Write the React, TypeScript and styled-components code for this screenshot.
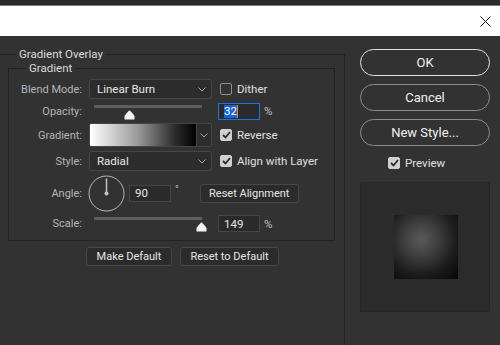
import React from "react";
import styled, { createGlobalStyle } from "styled-components";

const GlobalStyle = createGlobalStyle`
  html, body {
    margin: 0;
    padding: 0;
    background: #323232;
  }
  * {
    box-sizing: border-box;
  }
`;

const Chevron = () => (
  <svg width="8" height="5" viewBox="0 0 8 5">
    <polyline points="0.5,0.5 4,4 7.5,0.5" fill="none" stroke="#a8a8a8" strokeWidth="1" />
  </svg>
);

const Check = () => (
  <svg width="9" height="8" viewBox="0 0 9 8">
    <polyline points="1,4 3.5,6.5 8,1" fill="none" stroke="#2b2b2b" strokeWidth="1.8" />
  </svg>
);

const Thumb = () => (
  <svg width="11" height="10" viewBox="0 0 11 10">
    <path d="M5.5 0.5 Q6.5 0.5 10.5 6 V9.5 H0.5 V6 Q4.5 0.5 5.5 0.5 Z" fill="#f2f2f2" />
  </svg>
);

const Dial = ({ angle }: { angle: number }) => {
  const r = (angle * Math.PI) / 180;
  const x = 18 + Math.cos(r) * 15;
  const y = 18 - Math.sin(r) * 15;
  return (
    <svg width="37" height="37" viewBox="0 0 37 37">
      <circle cx="18.5" cy="18.5" r="17.5" fill="none" stroke="#b8b8b8" strokeWidth="1" />
      <line x1="18.5" y1="18.5" x2={x + 0.5} y2={y + 0.5} stroke="#c4c4c4" strokeWidth="1.5" />
      <circle cx="18.5" cy="18.5" r="2" fill="#c4c4c4" />
    </svg>
  );
};

const CheckBox = ({ checked, label }: { checked?: boolean; label: string }) => (
  <CheckLine>
    <Box $checked={checked}>{checked ? <Check /> : null}</Box>
    <span>{label}</span>
  </CheckLine>
);

const Slider = ({ pct }: { pct: number }) => (
  <SliderWrap>
    <TrackArea>
      <Track />
      <ThumbHold style={{ left: `${pct}%` }}>
        <Thumb />
      </ThumbHold>
    </TrackArea>
  </SliderWrap>
);

const App = () => {
  return (
    <>
      <GlobalStyle />
      <Window>
        <TopStrip />
        <TitleBar>
          <svg width="11" height="11" viewBox="0 0 11 11">
            <line x1="0.5" y1="0.5" x2="10.5" y2="10.5" stroke="#111" strokeWidth="1" />
            <line x1="10.5" y1="0.5" x2="0.5" y2="10.5" stroke="#111" strokeWidth="1" />
          </svg>
        </TitleBar>
        <Body>
          <LeftPane>
            <Outer>
              <Legend>Gradient Overlay</Legend>
              <Inner>
                <Legend $inner>Gradient</Legend>
                <Row $h={20}>
                  <Label>Blend Mode:</Label>
                  <Select>
                    <span>Linear Burn</span>
                    <Chevron />
                  </Select>
                  <Side>
                    <CheckBox label="Dither" />
                  </Side>
                </Row>
                <Row $h={16}>
                  <Label>Opacity:</Label>
                  <Slider pct={32} />
                  <Side $shift={-2}>
                    <Field $active>
                      <Selected>32</Selected>
                      <Caret />
                    </Field>
                    <Unit>%</Unit>
                  </Side>
                </Row>
                <Row $h={24}>
                  <Label>Gradient:</Label>
                  <Swatch>
                    <Ramp />
                    <SwatchDrop>
                      <Chevron />
                    </SwatchDrop>
                  </Swatch>
                  <Side>
                    <CheckBox checked label="Reverse" />
                  </Side>
                </Row>
                <Row $h={20}>
                  <Label>Style:</Label>
                  <Select>
                    <span>Radial</span>
                    <Chevron />
                  </Select>
                  <Side>
                    <CheckBox checked label="Align with Layer" />
                  </Side>
                </Row>
                <Row $h={36}>
                  <Label>Angle:</Label>
                  <AngleGroup>
                    <Dial angle={90} />
                    <Field $w={42}>90</Field>
                    <Degree>°</Degree>
                    <FlatButton $w={99}>Reset Alignment</FlatButton>
                  </AngleGroup>
                </Row>
                <Row $h={17}>
                  <Label>Scale:</Label>
                  <Slider pct={(149 / 150) * 100} />
                  <Side $shift={-2}>
                    <Field>149</Field>
                    <Unit>%</Unit>
                  </Side>
                </Row>
              </Inner>
              <ButtonRow>
                <FlatButton $w={86}>Make Default</FlatButton>
                <FlatButton $w={99}>Reset to Default</FlatButton>
              </ButtonRow>
            </Outer>
          </LeftPane>
          <RightPane>
            <Pill $primary>OK</Pill>
            <Pill>Cancel</Pill>
            <Pill>New Style...</Pill>
            <PreviewLine>
              <CheckBox checked label="Preview" />
            </PreviewLine>
            <PreviewBox>
              <PreviewSquare />
            </PreviewBox>
          </RightPane>
        </Body>
      </Window>
    </>
  );
};

export default App;

const Window = styled.div`
  width: 500px;
  height: 345px;
  overflow: hidden;
  background: #323232;
  display: flex;
  flex-direction: column;
  font-family: Roboto, "Liberation Sans", sans-serif;
  font-size: 11px;
  color: #b6b6b6;
`;

const TopStrip = styled.div`
  height: 6px;
  flex-shrink: 0;
  background: #2b2b2b;
  border-bottom: 1px solid #7a7a7a;
`;

const TitleBar = styled.div`
  height: 30px;
  flex-shrink: 0;
  background: #ffffff;
  display: flex;
  align-items: center;
  justify-content: flex-end;
  padding-right: 9px;
`;

const Body = styled.div`
  flex: 1;
  display: flex;
  min-height: 0;
  overflow: hidden;
`;

const LeftPane = styled.div`
  width: 345px;
  flex-shrink: 0;
`;

const Outer = styled.fieldset`
  width: 346px;
  height: 340px;
  margin: 11px 0 0 -1px;
  padding: 0;
  border: 1px solid #222222;
  min-width: 0;
`;

const Legend = styled.legend<{ $inner?: boolean }>`
  margin-left: ${({ $inner }) => ($inner ? "17px" : "16px")};
  padding: 0 3px;
  line-height: 14px;
  font-size: 11.5px;
  color: #dcdcdc;
`;

const Inner = styled.fieldset`
  margin: 0 9px 0 8px;
  padding: 4px 0 8px 0;
  border: 1px solid #222222;
  display: flex;
  flex-direction: column;
  gap: 4px;
  min-width: 0;
`;

const Row = styled.div<{ $h: number }>`
  height: ${({ $h }) => $h}px;
  display: flex;
  align-items: center;
`;

const Label = styled.div`
  width: 80px;
  padding-right: 7px;
  text-align: right;
  color: #b0b6bd;
  flex-shrink: 0;
`;

const Select = styled.div`
  width: 123px;
  height: 100%;
  background: #2c2c2c;
  border: 1px solid #464646;
  border-radius: 3px;
  display: flex;
  align-items: center;
  justify-content: space-between;
  padding: 0 5px 0 7px;
  color: #e8e8e8;
  font-size: 11.5px;
`;

const Side = styled.div<{ $shift?: number }>`
  margin-left: ${({ $shift }) => 8 + ($shift || 0)}px;
  display: flex;
  align-items: center;
  gap: 4px;
`;

const CheckLine = styled.div`
  display: flex;
  align-items: center;
  gap: 5px;
  color: #e0e0e0;
  font-size: 11.5px;
`;

const Box = styled.div<{ $checked?: boolean }>`
  width: 12px;
  height: 12px;
  border-radius: 2px;
  display: flex;
  align-items: center;
  justify-content: center;
  background: ${({ $checked }) => ($checked ? "#d0d0d0" : "transparent")};
  border: 1px solid ${({ $checked }) => ($checked ? "#d0d0d0" : "#8e8e8e")};
`;

const SliderWrap = styled.div`
  width: 123px;
  height: 100%;
  padding-left: 5px;
  align-self: stretch;
`;

const TrackArea = styled.div`
  position: relative;
  width: 108px;
  height: 100%;
`;

const Track = styled.div`
  margin-top: 2px;
  height: 3px;
  width: 100%;
  background: #5e5e5e;
`;

const ThumbHold = styled.div`
  position: absolute;
  top: 5px;
  margin-left: -5px;
  display: flex;
  line-height: 0;
`;

const Field = styled.div<{ $w?: number; $active?: boolean }>`
  width: ${({ $w }) => $w || 42}px;
  height: 17px;
  background: #2a2a2a;
  border: 1px solid ${({ $active }) => ($active ? "#1a73e8" : "#464646")};
  display: flex;
  align-items: center;
  padding-left: 5px;
  color: #e8e8e8;
  font-size: 11.5px;
`;

const Selected = styled.span`
  background: #1c64d4;
  color: #ffffff;
  line-height: 13px;
`;

const Caret = styled.span`
  width: 1px;
  height: 13px;
  background: #f08a24;
`;

const Unit = styled.span`
  color: #c0c0c0;
  font-size: 11.5px;
`;

const Swatch = styled.div`
  width: 123px;
  height: 100%;
  display: flex;
  border: 1px solid #464646;
  border-radius: 2px;
  overflow: hidden;
`;

const Ramp = styled.div`
  flex: 1;
  background: linear-gradient(to right, #ffffff 0%, #9a9a9a 45%, #2c2c2c 80%, #000000 100%);
`;

const SwatchDrop = styled.div`
  width: 15px;
  background: #2c2c2c;
  border-left: 1px solid #464646;
  display: flex;
  align-items: center;
  justify-content: center;
`;

const AngleGroup = styled.div`
  display: flex;
  align-items: center;
  gap: 4px;
  margin-left: -1px;
`;

const Degree = styled.span`
  align-self: flex-start;
  margin-top: 9px;
  margin-right: 17px;
  color: #c0c0c0;
  font-size: 10px;
`;

const FlatButton = styled.div<{ $w: number }>`
  width: ${({ $w }) => $w}px;
  height: 19px;
  background: #2b2b2b;
  border: 1px solid #474747;
  border-radius: 3px;
  display: flex;
  align-items: center;
  justify-content: center;
  color: #e6e6e6;
  font-size: 11px;
`;

const ButtonRow = styled.div`
  display: flex;
  gap: 8px;
  margin-top: 6px;
  padding-left: 86px;
`;

const RightPane = styled.div`
  flex: 1;
  display: flex;
  flex-direction: column;
  padding: 13px 0 0 15px;
`;

const Pill = styled.div<{ $primary?: boolean }>`
  width: 130px;
  height: 27px;
  margin-bottom: 8px;
  border-radius: 14px;
  border: ${({ $primary }) => ($primary ? "1.5px solid #e2e2e2" : "1px solid #8c8c8c")};
  display: flex;
  align-items: center;
  justify-content: center;
  color: #f0f0f0;
  font-size: 13px;
`;

const PreviewLine = styled.div`
  display: flex;
  padding-left: 28px;
  margin-top: 3px;
  height: 12px;
  align-items: center;
  font-size: 12.5px;
`;

const PreviewBox = styled.div`
  width: 130px;
  height: 130px;
  margin-top: 13px;
  background: #2b2b2b;
  border: 1px solid #262626;
  display: flex;
  align-items: center;
  justify-content: center;
  padding-left: 2px;
`;

const PreviewSquare = styled.div`
  width: 64px;
  height: 64px;
  background: radial-gradient(
    circle at 42% 38%,
    #5a5a5a 0%,
    #404040 30%,
    #1c1c1c 65%,
    #050505 100%
  );
`;
